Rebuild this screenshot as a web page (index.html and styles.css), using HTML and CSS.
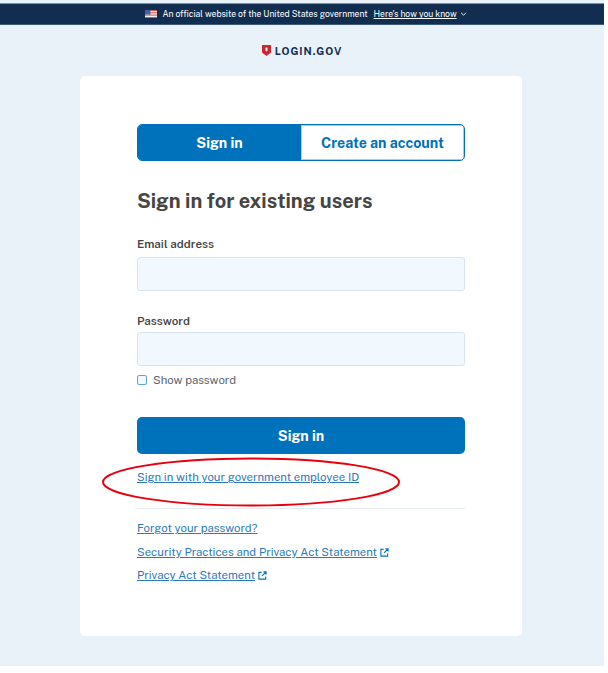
FILE: index.html
```html
<!DOCTYPE html>
<html lang="en">
  <head>
    <meta charset="UTF-8" />
    <meta name="viewport" content="width=device-width, initial-scale=1.0" />
    <title>Login.gov - Sign in</title>
    <link rel="stylesheet" href="styles.css">
  </head>
  <body>
    <div class="page">
      <div class="banner">
        <svg class="flag" viewBox="0 0 12 8" width="12" height="8">
          <rect width="12" height="8" fill="#f4f0ee" />
          <rect width="12" height="1" fill="#d9534f" />
          <rect y="2.3" width="12" height="1" fill="#d9534f" />
          <rect y="4.6" width="12" height="1" fill="#d9534f" />
          <rect y="7" width="12" height="1" fill="#d9534f" />
          <rect width="5.5" height="4.6" fill="#4a5f9c" />
        </svg>
        <span class="banner-text">An official website of the United States government</span>
        <a class="banner-link">Here's how you know</a>
        <svg class="chevron" viewBox="0 0 8 5" width="7" height="4">
          <path d="M1 1l3 3 3-3" fill="none" stroke="#fff" stroke-width="1.2" />
        </svg>
      </div>

      <div class="logo">
        <svg class="shield" viewBox="0 0 9 11" width="9" height="11">
          <path d="M0 0h9v7.500L4.500 11 0 7.500z" fill="#d1252e" />
          <rect x="3.500" y="2.400" width="2" height="3.800" rx=".7" fill="#fff" />
        </svg>
        <span>LOGIN.GOV</span>
      </div>

      <div class="card">
        <div class="tabs">
          <a class="tab active">Sign in</a>
          <a class="tab">Create an account</a>
        </div>

        <h1>Sign in for existing users</h1>

        <label class="field-label">Email address</label>
        <div class="input"></div>

        <label class="field-label password-label">Password</label>
        <div class="input"></div>

        <div class="show-password">
          <span class="checkbox"></span>
          <span>Show password</span>
        </div>

        <button class="submit">Sign in</button>

        <div class="employee">
          <a class="link">Sign in with your government employee ID</a>
          <svg class="circled" viewBox="0 0 300 50" width="300" height="50">
            <ellipse cx="149" cy="25" rx="148" ry="23.5" fill="none" stroke="#e8000d" stroke-width="2" />
          </svg>
        </div>

        <div class="links">
          <a class="link">Forgot your password?</a>
          <div>
            <a class="link">Security Practices and Privacy Act Statement</a>
            <svg class="ext" viewBox="0 0 10 10" width="9" height="9">
              <path d="M4 1.500H1v7.500h7.500V6M6 1h3v3M9 1L4.500 5.500" fill="none" stroke="#0071bb" stroke-width="1.200" />
            </svg>
          </div>
          <div>
            <a class="link">Privacy Act Statement</a>
            <svg class="ext" viewBox="0 0 10 10" width="9" height="9">
              <path d="M4 1.500H1v7.500h7.500V6M6 1h3v3M9 1L4.500 5.500" fill="none" stroke="#0071bb" stroke-width="1.200" />
            </svg>
          </div>
        </div>
      </div>
    </div>
  </body>
</html>
```

FILE: styles.css
```css
body {
  margin: 0;
  background: white;
  font-family: "Public Sans", "Inter", "Liberation Sans", sans-serif;
  color: #454545;
}
.page {
  width: 604px;
  height: 666px;
  background: #e9f1f9;
  padding-top: 3px;
  box-sizing: border-box;
}
.banner {
  height: 22px;
  box-sizing: border-box;
  background: #112e51;
  border-top: 1px solid #8a9099;
  border-bottom: 1px solid #3d5a7a;
  color: white;
  display: flex;
  align-items: center;
  justify-content: center;
  padding-left: 8px;
  font-size: 8.600px;
}
.flag {
  margin-right: 5px;
}
.banner-link {
  margin-left: 6px;
  text-decoration: underline;
}
.chevron {
  margin-left: 3px;
}
.logo {
  display: flex;
  align-items: center;
  justify-content: center;
  gap: 4px;
  margin-top: 19px;
  height: 13px;
  font-size: 10.500px;
  font-weight: 700;
  letter-spacing: 1px;
  color: #112e51;
}
.card {
  width: 442px;
  height: 560px;
  margin: 19px 0 0 80px;
  padding: 48px 57px 0;
  box-sizing: border-box;
  background: white;
  border-radius: 5px;
}
.tabs {
  display: flex;
  height: 37px;
  border: 1px solid #0071bb;
  border-radius: 5px;
  overflow: hidden;
  box-sizing: border-box;
}
.tab {
  flex: 1;
  display: flex;
  align-items: center;
  justify-content: center;
  font-size: 14.200px;
  font-weight: 700;
  color: #0071bb;
  box-shadow: inset 0 0 0 1px rgba(0, 113, 187, 0.35);
}
.tab.active {
  background: #0071bb;
  color: white;
}
h1 {
  margin: 27px 0 0;
  font-size: 20px;
  line-height: 26px;
  font-weight: 700;
  color: #454545;
}
.field-label {
  display: block;
  margin-top: 22px;
  margin-bottom: 5px;
  font-size: 11.600px;
  line-height: 16px;
  font-weight: 600;
}
.password-label {
  margin-top: 22px;
  margin-bottom: 3px;
}
.input {
  height: 34px;
  box-sizing: border-box;
  background: #f1f8fe;
  border: 1px solid #d6e4f2;
  border-radius: 3px;
}
.show-password {
  display: flex;
  align-items: center;
  gap: 6px;
  margin-top: 7px;
  font-size: 11.400px;
  line-height: 14px;
  color: #5b616b;
}
.checkbox {
  width: 8px;
  height: 8px;
  border: 1px solid #5fa3d6;
  border-radius: 2px;
  background: #f1f8fe;
}
.submit {
  display: block;
  width: 100%;
  height: 37px;
  margin-top: 30px;
  border: none;
  border-radius: 5px;
  background: #0071bb;
  color: white;
  font-family: inherit;
  font-size: 14.200px;
  font-weight: 700;
}
.employee {
  position: relative;
  margin-top: 14px;
  height: 40px;
  border-bottom: 1px solid #e4eaf2;
  line-height: 16px;
}
.link {
  font-size: 11.400px;
  color: #2a7ab8;
  text-decoration: underline;
}
.circled {
  position: absolute;
  left: -35px;
  top: -11px;
}
.links {
  display: flex;
  flex-direction: column;
  gap: 7.500px;
  margin-top: 11px;
  font-size: 11.400px;
  line-height: 16px;
}
.ext {
  margin-left: 0;
  vertical-align: -1px;
}
```
